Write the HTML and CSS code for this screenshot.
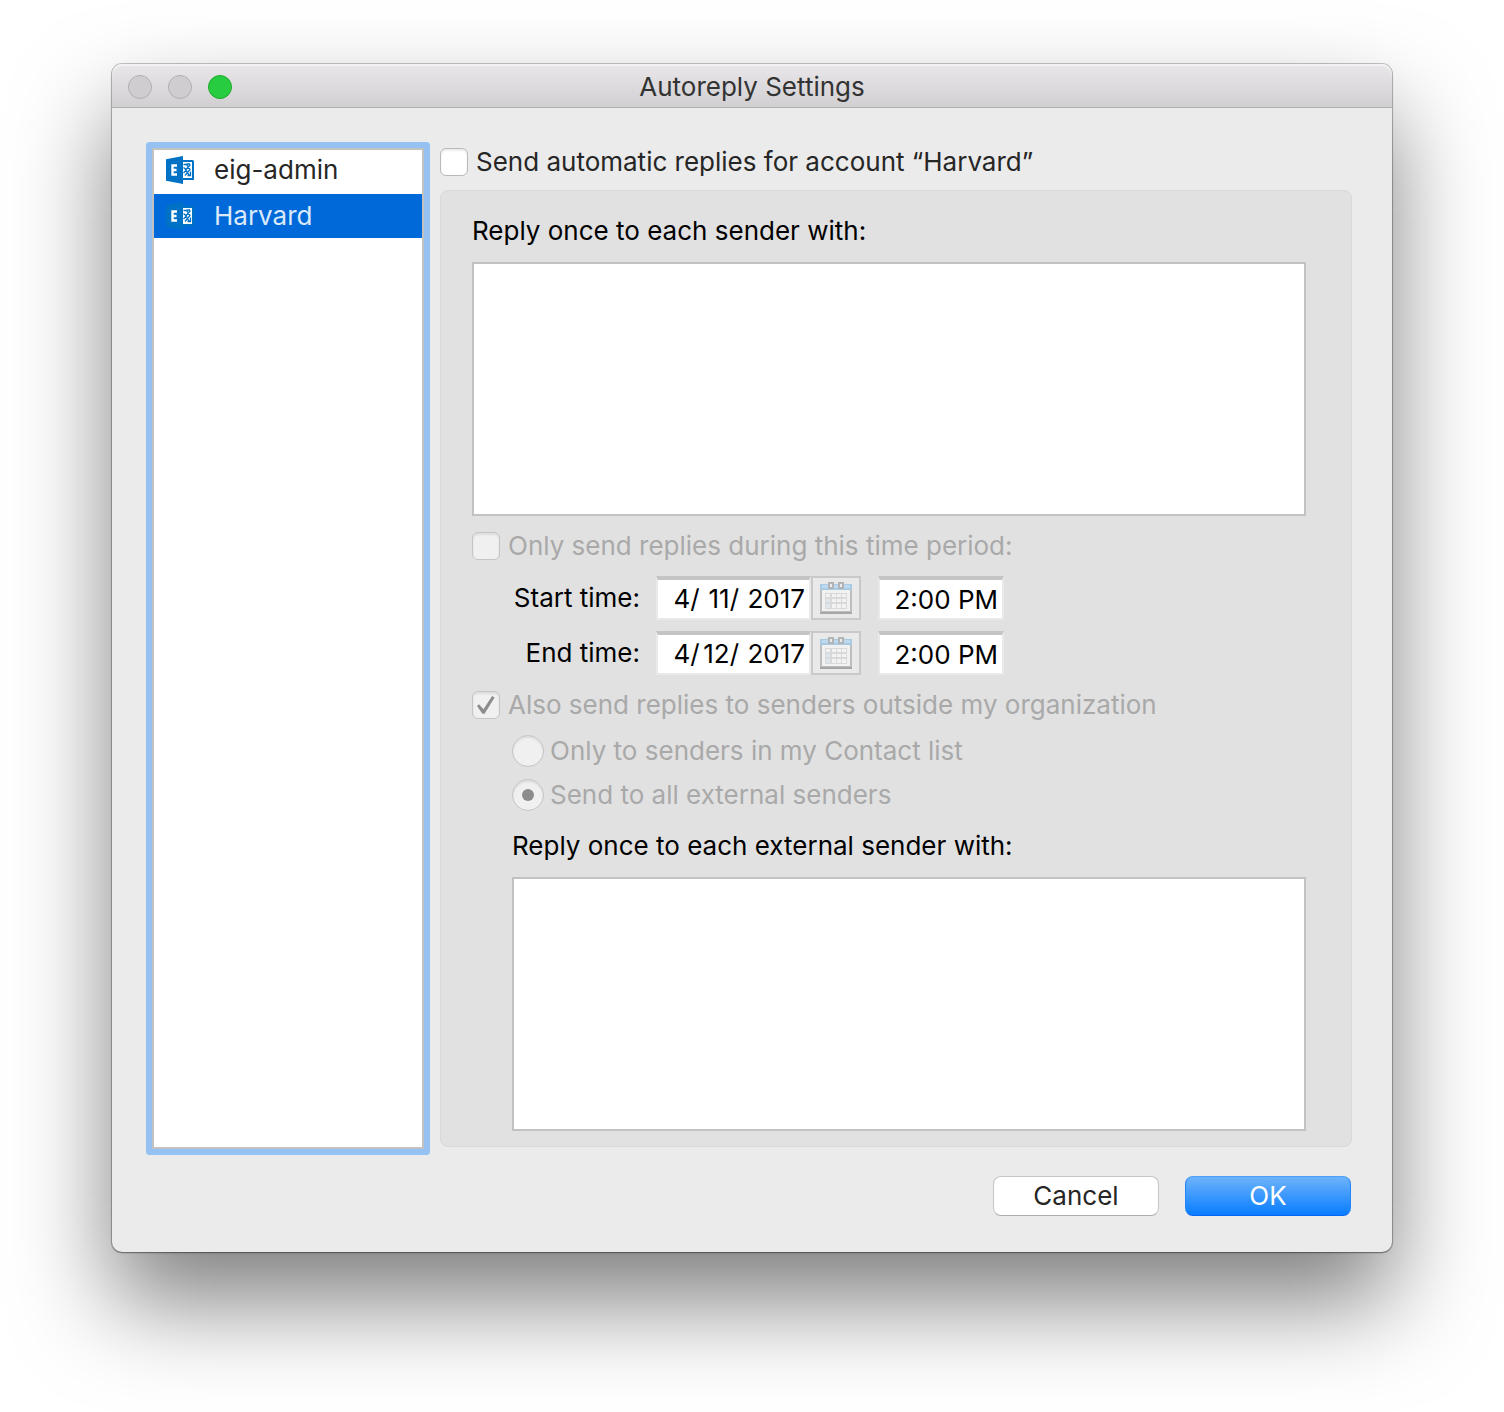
FILE: index.html
```html
<!DOCTYPE html>
<html lang="en">
<head>
<meta charset="utf-8">
<title>Autoreply Settings</title>
<link rel="stylesheet" href="styles.css">
</head>
<body>
<svg class="sprite" aria-hidden="true">
  <symbol id="exchange" viewBox="0 0 28 28">
    <path class="ex-frame" d="M16 4h10.500a1.500 1.500 0 0 1 1.500 1.500v16a1.500 1.500 0 0 1-1.500 2.500H16z"/>
    <path class="ex-page" d="M17 6h9v16h-9z"/>
    <path class="ex-mark" d="M17.500 8.500h3l3.500 5-5 6M24.500 8.500l-5 5.500 4 5.500M24 8l-3.500 0M17.500 11.500l3 2.500-3 3M24.500 15.500v4h-3"/>
    <path class="ex-door" d="M0 3.200L17 0v28L0 24.800z"/>
    <path class="ex-letter" d="M11 9.500H6.500v9H11M6.500 14h4"/>
  </symbol>
  <symbol id="calendar" viewBox="0 0 32 32">
    <path fill="#f1f1f1" stroke="#bdbdbd" stroke-width="2" d="M1 3h30v27H1z"/>
    <path fill="#a8cbe5" d="M0 2h32v6H0z"/>
    <path fill="#bcd9ef" d="M2 3h28v3H2z"/>
    <path fill="#a6a6a6" d="M0 30h32v2H0z"/>
    <path fill="#d9d9d9" d="M5 11h22v16H5z"/>
    <path fill="#f3f3f3" d="M6 12h4v3H6zM12 12h4v3h-4zM17 12h4v3h-4zM22 12h4v3h-4zM12 17h4v3h-4zM17 17h4v3h-4zM22 17h4v3h-4zM12 22h4v4h-4zM17 22h4v4h-4zM22 22h4v4h-4z"/>
    <path fill="#dde7ef" d="M6 17h4v3H6zM6 22h4v4H6z"/>
    <path fill="#ececec" stroke="#b3b3b3" stroke-width="2" d="M9 1h4v5H9zM19 1h4v5h-4z"/>
  </symbol>
</svg>

<main class="window">
  <header class="titlebar">
    <div class="lights">
      <button class="light" type="button" aria-label="Close"></button>
      <button class="light" type="button" aria-label="Minimize"></button>
      <button class="light light-zoom" type="button" aria-label="Zoom"></button>
    </div>
    <h1 class="title">Autoreply Settings</h1>
  </header>

  <form class="content">
    <div class="columns">
      <nav class="accounts" aria-label="Accounts">
        <button class="account" type="button"><svg class="account-icon"><use href="#exchange"/></svg>eig-admin</button>
        <button class="account selected" type="button"><svg class="account-icon"><use href="#exchange"/></svg>Harvard</button>
      </nav>

      <section class="settings">
        <label class="option main-option"><input class="check" type="checkbox">Send automatic replies for account “Harvard”</label>

        <div class="panel">
          <label class="heading" for="reply">Reply once to each sender with:</label>
          <textarea class="message" id="reply"></textarea>

          <label class="option disabled"><input class="check" type="checkbox" disabled>Only send replies during this time period:</label>

          <div class="times">
            <label class="time-label" for="start-month">Start time:</label>
            <div class="date">
              <input class="part" id="start-month" value="4"><span>/</span>
              <input class="part day" aria-label="Start day" value="11"><span>/</span>
              <input class="part year" aria-label="Start year" value="2017">
            </div>
            <button class="picker" type="button" aria-label="Choose start date"><svg class="picker-icon"><use href="#calendar"/></svg></button>
            <input class="clock" aria-label="Start clock time" value="2:00 PM">

            <label class="time-label" for="end-month">End time:</label>
            <div class="date">
              <input class="part" id="end-month" value="4"><span>/</span>
              <input class="part day" aria-label="End day" value="12"><span>/</span>
              <input class="part year" aria-label="End year" value="2017">
            </div>
            <button class="picker" type="button" aria-label="Choose end date"><svg class="picker-icon"><use href="#calendar"/></svg></button>
            <input class="clock" aria-label="End clock time" value="2:00 PM">
          </div>

          <label class="option disabled"><input class="check" type="checkbox" checked disabled>Also send replies to senders outside my organization</label>

          <div class="external">
            <label class="option choice disabled"><input class="radio" type="radio" name="scope" disabled>Only to senders in my Contact list</label>
            <label class="option choice disabled"><input class="radio" type="radio" name="scope" checked disabled>Send to all external senders</label>
            <label class="heading external-heading" for="external-reply">Reply once to each external sender with:</label>
            <textarea class="message" id="external-reply"></textarea>
          </div>
        </div>
      </section>
    </div>

    <footer class="actions">
      <button class="button" type="button">Cancel</button>
      <button class="button primary" type="button">OK</button>
    </footer>
  </form>
</main>
</body>
</html>
```

FILE: styles.css
```css
* {
  box-sizing: border-box;
}

body {
  margin: 0;
  padding: 64px 112px 160px;
  background: #fff;
  color: #000;
  font: 26px/32px Inter, "Liberation Sans", sans-serif;
}

button,
input,
textarea {
  margin: 0;
  padding: 0;
  border: 0;
  color: inherit;
  font: inherit;
}

.sprite {
  display: none;
}

.window {
  border-radius: 10px;
  background: #ebebeb;
  box-shadow: 0 0 0 1px rgba(0, 0, 0, 0.22), 0 1px 2px rgba(0, 0, 0, 0.3), 0 50px 96px rgba(0, 0, 0, 0.5);
}

.titlebar {
  display: grid;
  grid-template-columns: 1fr auto 1fr;
  align-items: center;
  height: 44px;
  padding: 2px 16px 0;
  border-bottom: 1px solid #b0aeb0;
  border-radius: 10px 10px 0 0;
  background: linear-gradient(#e9e7e9, #d1cfd1);
  box-shadow: inset 0 2px 0 #f3f2f3;
}

.lights {
  display: flex;
  gap: 16px;
}

.light {
  width: 24px;
  height: 24px;
  border: 1px solid #b0aeb0;
  border-radius: 50%;
  background: #cfcdcf;
}

.light-zoom {
  border-color: #1dad2b;
  background: #28cc40;
}

.title {
  margin: 0;
  color: #333;
  font-size: 26px;
  font-weight: 400;
}

.content {
  padding: 40px 40px 36px;
}

.columns {
  display: flex;
  gap: 16px;
}

.accounts {
  flex: 0 0 272px;
  border: 2px solid #c2c2c2;
  border-radius: 1px;
  background: #fff;
  box-shadow: 0 0 0 6px #95c2f3;
}

.account {
  display: flex;
  align-items: center;
  gap: 20px;
  width: 100%;
  height: 40px;
  margin-bottom: 4px;
  padding-left: 12px;
  background: #fff;
  color: #262626;
}

.account.selected {
  height: 44px;
  background: #0069d9;
  color: #dbe9fa;
}

.account-icon {
  width: 28px;
  height: 28px;
}

.ex-frame,
.ex-door {
  fill: #0072c6;
}

.ex-page {
  fill: #fff;
}

.ex-mark {
  fill: none;
  stroke: #0072c6;
  stroke-width: 1.3;
}

.ex-letter {
  fill: none;
  stroke: #fff;
  stroke-width: 2.4;
}

.settings {
  flex: 1;
  min-width: 0;
  padding-bottom: 2px;
}

.option {
  display: flex;
  align-items: center;
  gap: 8px;
  height: 28px;
}

.main-option {
  margin-bottom: 14px;
  color: #262626;
}

.disabled {
  color: #a9a9a9;
}

.check,
.radio {
  appearance: none;
  display: grid;
  place-items: center;
  flex: none;
  width: 28px;
  height: 28px;
  border: 1px solid #b9b9b9;
  border-radius: 6px;
  background: #fff;
  box-shadow: inset 0 2px 2px rgba(0, 0, 0, 0.08);
}

.check:disabled,
.radio:disabled {
  border-color: #c4c4c4;
  background: #f0f0f0;
}

.check:checked::before {
  content: "";
  width: 18px;
  height: 18px;
  background: #8c8c8c;
  clip-path: polygon(0 55%, 11% 46%, 36% 74%, 84% 0, 98% 8%, 42% 98%, 30% 98%);
}

.radio {
  width: 32px;
  height: 32px;
  border-radius: 50%;
}

.radio:checked::before {
  content: "";
  width: 12px;
  height: 12px;
  border-radius: 50%;
  background: #8c8c8c;
}

.panel {
  padding: 24px 45px 15px 31px;
  border: 1px solid #d9d9d9;
  border-radius: 8px;
  background: #e1e1e1;
}

.heading {
  display: block;
  margin-bottom: 15px;
}

.message {
  display: block;
  width: 100%;
  height: 254px;
  margin-bottom: 16px;
  border: 2px solid #c2c2c2;
  background: #fff;
  resize: none;
}

.times {
  display: grid;
  grid-template-columns: 184px 155px 50px 143px;
  row-gap: 11px;
  margin: 16px 0;
}

.time-label {
  align-self: center;
  padding-right: 16px;
  text-align: right;
  white-space: nowrap;
}

.date,
.clock {
  height: 44px;
  border: 2px solid #e9e9e9;
  border-top: 4px solid #c4c4c4;
  background: #fff;
}

.date {
  display: flex;
  align-items: center;
  justify-content: flex-end;
  padding-right: 4px;
}

.part {
  width: 18px;
  background: none;
  text-align: right;
}

.day {
  width: 30px;
}

.year {
  width: 66px;
}

.picker {
  display: grid;
  place-items: center;
  height: 44px;
  border: 2px solid #c9c9c9;
  background: #e9e9e9;
}

.picker-icon {
  width: 32px;
  height: 32px;
}

.clock {
  justify-self: end;
  width: 126px;
  padding-right: 4px;
  text-align: right;
}

.external {
  margin-top: 16px;
  padding-left: 40px;
}

.choice {
  gap: 6px;
  height: 32px;
  margin-bottom: 12px;
}

.external-heading {
  padding-top: 7px;
}

.external .message {
  margin-bottom: 0;
}

.actions {
  display: flex;
  justify-content: flex-end;
  gap: 26px;
  padding: 27px 1px 0 0;
}

.button {
  width: 166px;
  height: 40px;
  border: 1px solid #c6c6c6;
  border-bottom-color: #acacac;
  border-radius: 8px;
  background: #fff;
  color: #262626;
}

.primary {
  border-color: #4a9ff8 #2387fb #0765f5;
  background: linear-gradient(#6db3fa, #087dff);
  color: #fff;
}
```
